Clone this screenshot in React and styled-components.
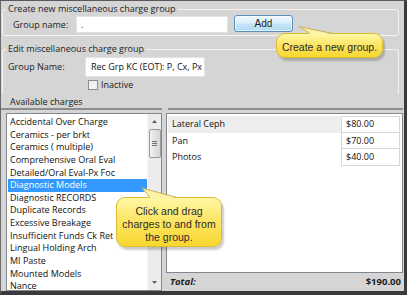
import React from 'react';
import styled, { createGlobalStyle } from 'styled-components';

const Global = createGlobalStyle`
  html, body { margin: 0; padding: 0; background: #fff; }
  body { font-family: "Open Sans", "Noto Sans", sans-serif; }
  * { box-sizing: border-box; }
`;

const Frame = styled.div`
  position: relative;
  width: 407px;
  height: 295px;
  background: #d5d5d5;
  border-style: solid;
  border-color: #5a5a5a #3a3a3a #3a3a3a #6a6a6a;
  border-width: 1px 3px 4px 1px;
  display: flex;
  flex-direction: column;
  overflow: hidden;
  font-size: 9px;
  color: #1c1c1c;
`;

const Group = styled.fieldset`
  margin: ${(p) => p.$top}px 5px 0 1px;
  padding: 0 4px ${(p) => p.$pb}px 3px;
  border: 1px solid #f3f3f3;
  border-bottom: ${(p) => (p.$open ? '1px solid transparent' : '1px solid #f3f3f3')};
  border-radius: 3px;
  min-width: 0;
`;

const Legend = styled.legend`
  padding: 0 2px;
  line-height: 12px;
  font-size: 9px;
  color: #1c1c1c;
`;

const FieldRow = styled.div`
  display: flex;
  align-items: flex-start;
  height: ${(p) => p.$h}px;
  margin: ${(p) => p.$mt || 0}px 0 0 ${(p) => p.$ml}px;
`;

const Label = styled.span`
  width: ${(p) => p.$w}px;
  flex: none;
  line-height: ${(p) => p.$lh}px;
  color: #222;
`;

const TextBox = styled.div`
  width: ${(p) => p.$w}px;
  height: ${(p) => p.$h}px;
  margin-top: ${(p) => p.$mt || 0}px;
  background: #fff;
  border: 1px solid #e2e2e2;
  padding-left: ${(p) => p.$pl}px;
  line-height: ${(p) => p.$h - 2}px;
  white-space: nowrap;
  overflow: hidden;
  color: #111;
`;

const AddButton = styled.button`
  width: 59px;
  height: 17px;
  margin-left: 6px;
  padding: 0;
  border: 1px solid #5b8fbd;
  border-radius: 3px;
  background: linear-gradient(#eef7fd 0%, #dcf0fc 45%, #c3e4f7 55%, #b2dbf3 100%);
  box-shadow: inset 0 0 0 1px rgba(255, 255, 255, 0.6);
  font-family: "Liberation Sans", Arial, sans-serif;
  font-size: 10px;
  color: #222;
  line-height: 15px;
`;

const CheckRow = styled.label`
  display: flex;
  align-items: center;
  gap: 3px;
  height: 10px;
  margin: 3px 0 0 82px;
  line-height: 10px;
`;

const CheckBox = styled.span`
  width: 10px;
  height: 10px;
  border: 1px solid #8e8f8f;
  background: linear-gradient(135deg, #e8e8e8, #fbfbfb);
  box-shadow: inset 0 0 0 1px #f2f2f2;
`;

const Charges = styled.div`
  flex: 1;
  min-height: 0;
  display: grid;
  grid-template-columns: 161px 1fr;
  grid-template-rows: 14px 1fr;
  column-gap: 4px;
  row-gap: 3px;
  margin: 1px 1px 0 0;
`;

const Header = styled.div`
  border-bottom: 2px solid #8d8d8d;
  padding-left: ${(p) => p.$pl}px;
  margin-left: ${(p) => p.$ml}px;
  line-height: 12px;
  color: #1c1c1c;
`;

const ListBox = styled.div`
  margin-left: 5px;
  display: flex;
  background: #fff;
  border: 1px solid #838790;
  min-height: 0;
  overflow: hidden;
`;

const Items = styled.div`
  flex: 1;
  padding: 2px 0 0 1px;
  overflow: hidden;
`;

const Item = styled.div`
  height: 12.65px;
  line-height: 12.65px;
  padding-left: 2px;
  white-space: nowrap;
  color: ${(p) => (p.$sel ? '#fff' : '#111')};
  background: ${(p) => (p.$sel ? '#3399ff' : 'transparent')};
`;

const ScrollBar = styled.div`
  width: 14px;
  flex: none;
  display: flex;
  flex-direction: column;
  align-items: center;
  background: #ececec;
  border-left: 1px solid #f6f6f6;
`;

const ScrollArrow = styled.div`
  height: 15px;
  display: flex;
  align-items: center;
  justify-content: center;
  margin-top: ${(p) => (p.$down ? 'auto' : '0')};
`;

const Thumb = styled.div`
  width: 12px;
  height: 29px;
  border: 1px solid #9a9a9a;
  border-radius: 2px;
  background: linear-gradient(90deg, #f3f3f3, #e2e2e2 50%, #d6d6d6);
  display: flex;
  flex-direction: column;
  align-items: center;
  justify-content: center;
  gap: 1px;
`;

const Grip = styled.span`
  width: 5px;
  height: 1px;
  background: #6f6f6f;
`;

const RightCol = styled.div`
  display: flex;
  flex-direction: column;
  min-height: 0;
`;

const Panel = styled.div`
  flex: 1;
  background: #fff;
  border: 1px solid #838790;
  padding: 2px 1px 0 1px;
`;

const ChargeRow = styled.div`
  display: grid;
  grid-template-columns: 1fr 60px;
  height: 16.5px;
  line-height: 16px;
`;

const ChargeName = styled.div`
  padding-left: 4px;
  background: ${(p) => (p.$active ? '#eeeeee' : '#fff')};
  color: #111;
`;

const Price = styled.div`
  border: 1px solid #d8d8d8;
  border-top: ${(p) => (p.$first ? '1px solid #d8d8d8' : 'none')};
  margin-right: 1px;
  padding-left: 4px;
  color: #111;
  line-height: ${(p) => (p.$first ? 14 : 15)}px;
`;

const TotalRow = styled.div`
  height: 18px;
  display: flex;
  align-items: center;
  justify-content: space-between;
  padding: 0 2px 1px 4px;
  font-weight: 700;
  font-size: 9.5px;
  color: #1c1c1c;
`;

const TotalLabel = styled.span`
  font-style: italic;
`;

const Bubble = styled.div`
  position: absolute;
  left: ${(p) => p.$x}px;
  top: ${(p) => p.$y}px;
  width: ${(p) => p.$w}px;
  height: ${(p) => p.$h}px;
  padding-top: ${(p) => p.$pt}px;
  border: 1px solid #dcbc2e;
  border-radius: 9px;
  background: linear-gradient(#fff7a6 0%, #fce666 45%, #f8d72f 100%);
  box-shadow: 2px 3px 2px rgba(0, 0, 0, 0.2);
  font-family: "Liberation Sans", Arial, sans-serif;
  font-size: 10.5px;
  line-height: ${(p) => p.$lh}px;
  text-align: center;
  color: #2b2b2b;
  white-space: nowrap;
`;

const Pointer = styled.svg`
  position: absolute;
  left: -1px;
  top: -1px;
  width: 1px;
  height: 1px;
  overflow: visible;
`;

const CALLOUT_FILL = '#fdf3a4';
const CALLOUT_STROKE = '#c9b357';

function Callout({ x, y, w, h, pt, lh, tip, base, children }) {
  const [tx, ty] = tip;
  const [[ax, ay], [bx, by]] = base;
  return (
    <Bubble $x={x} $y={y} $w={w} $h={h} $pt={pt} $lh={lh}>
      <Pointer>
        <polygon points={`${ax},${ay + 1.5} ${tx},${ty} ${bx},${by + 1.5}`} fill={CALLOUT_FILL} />
        <polyline
          points={`${ax},${ay + 0.5} ${tx},${ty} ${bx},${by + 0.5}`}
          fill="none"
          stroke={CALLOUT_STROKE}
          strokeWidth="1"
        />
      </Pointer>
      {children}
    </Bubble>
  );
}

const available = [
  'Accidental Over Charge',
  'Ceramics - per brkt',
  'Ceramics ( multiple)',
  'Comprehensive Oral Eval',
  'Detailed/Oral Eval-Px Foc',
  'Diagnostic Models',
  'Diagnostic RECORDS',
  'Duplicate Records',
  'Excessive Breakage',
  'Insufficient Funds Ck Ret',
  'Lingual Holding Arch',
  'MI Paste',
  'Mounted Models',
  'Nance',
];

const group = [
  { name: 'Lateral Ceph', price: '$80.00' },
  { name: 'Pan', price: '$70.00' },
  { name: 'Photos', price: '$40.00' },
];

export default function App() {
  return (
    <>
      <Global />
      <Frame>
        <Group $top={2} $pb={2}>
          <Legend>Create new miscellaneous charge group</Legend>
          <FieldRow $h={18} $ml={7}>
            <Label $w={63} $lh={19}>Group name:</Label>
            <TextBox $w={152} $h={17} $mt={1} $pl={4}>.</TextBox>
            <AddButton>Add</AddButton>
          </FieldRow>
        </Group>
        <Group $top={7} $pb={4} $open>
          <Legend>Edit miscellaneous charge group</Legend>
          <FieldRow $h={20} $ml={2} $mt={2}>
            <Label $w={77} $lh={20}>Group Name:</Label>
            <TextBox $w={120} $h={20} $pl={5}>Rec Grp KC (EOT): P, Cx, Px</TextBox>
          </FieldRow>
          <CheckRow>
            <CheckBox />
            <span>Inactive</span>
          </CheckRow>
        </Group>
        <Charges>
          <Header $pl={9} $ml={0}>Available charges</Header>
          <Header $pl={0} $ml={2} />
          <ListBox>
            <Items>
              {available.map((a) => (
                <Item key={a} $sel={a === 'Diagnostic Models'}>{a}</Item>
              ))}
            </Items>
            <ScrollBar>
              <ScrollArrow>
                <svg width="5" height="3" viewBox="0 0 5 3"><path d="M0 3 L2.5 0 L5 3 Z" fill="#606060" /></svg>
              </ScrollArrow>
              <Thumb>
                <Grip />
                <Grip />
                <Grip />
              </Thumb>
              <ScrollArrow $down>
                <svg width="5" height="3" viewBox="0 0 5 3"><path d="M0 0 L2.5 3 L5 0 Z" fill="#606060" /></svg>
              </ScrollArrow>
            </ScrollBar>
          </ListBox>
          <RightCol>
            <Panel>
              {group.map((g, i) => (
                <ChargeRow key={g.name}>
                  <ChargeName $active={i === 0}>{g.name}</ChargeName>
                  <Price $first={i === 0}>{g.price}</Price>
                </ChargeRow>
              ))}
            </Panel>
            <TotalRow>
              <TotalLabel>Total:</TotalLabel>
              <span>$190.00</span>
            </TotalRow>
          </RightCol>
        </Charges>
        <Callout
          x={275}
          y={32}
          w={107}
          h={25}
          pt={7}
          lh={13}
          tip={[23.3, -6.3]}
          base={[[34, 0], [57.3, 0]]}
        >
          Create a new group.
        </Callout>
        <Callout
          x={115}
          y={196}
          w={106}
          h={50}
          pt={7}
          lh={12.8}
          tip={[26, -9]}
          base={[[34, 0], [61, 0]]}
        >
          Click and drag
          <br />
          charges to and from
          <br />
          the group.
        </Callout>
      </Frame>
    </>
  );
}
